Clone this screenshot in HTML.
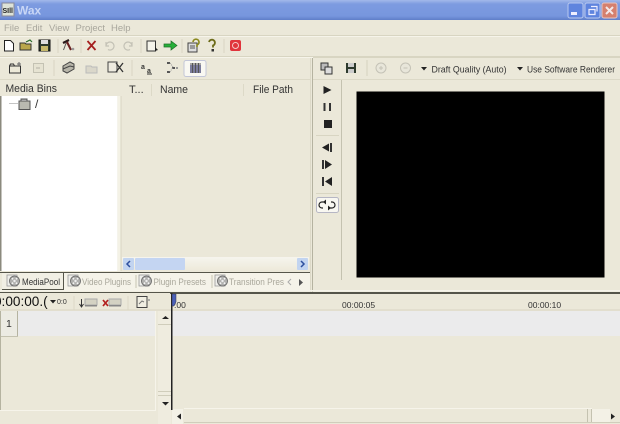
<!DOCTYPE html>
<html><head><meta charset="utf-8"><style>
html,body{margin:0;padding:0;background:#ebe8d9;width:620px;height:424px;overflow:hidden}
svg{display:block;filter:blur(.35px)}
text{font-family:"Liberation Sans",sans-serif;font-size:10px;fill:#333}
</style></head><body>
<svg width="620" height="424" viewBox="0 0 620 424">
<defs>
<linearGradient id="tb" x1="0" y1="0" x2="0" y2="1"><stop offset="0" stop-color="#a3b9ea"/><stop offset=".2" stop-color="#7d9be0"/><stop offset=".8" stop-color="#7796de"/><stop offset="1" stop-color="#5f7ec8"/></linearGradient>
<linearGradient id="sb" x1="0" y1="0" x2="0" y2="1"><stop offset="0" stop-color="#f6f5ee"/><stop offset="1" stop-color="#eeeadb"/></linearGradient>
<g id="reel"><rect x="0" y="2" width="10" height="11" fill="#eeeeea" stroke="#999" stroke-width=".8"/><circle cx="7.500" cy="8" r="5" fill="#b0b0ae" stroke="#666" stroke-width=".8"/><circle cx="7.500" cy="8" r="1.200" fill="#eee"/><circle cx="5.500" cy="5.800" r=".9" fill="#f4f4f4"/><circle cx="9.500" cy="10.200" r=".9" fill="#f4f4f4"/><circle cx="9.500" cy="5.800" r=".9" fill="#f4f4f4"/><circle cx="5.500" cy="10.200" r=".9" fill="#f4f4f4"/></g>
</defs>
<rect width="620" height="424" fill="#ebe8d9"/>
<!-- title bar -->
<rect width="620" height="20" fill="url(#tb)"/>
<rect x="2" y="3" width="12" height="13" fill="#dde3d8" stroke="#889"/>
<text x="2.500" y="13" style="font-size:7px;font-weight:bold;fill:#222">SIll</text>
<text x="17" y="14.500" style="font-size:12px;font-weight:bold;fill:#c9d7f6">Wax</text>
<rect x="568" y="3" width="15" height="15" rx="2" fill="#5f84de" stroke="#b8c8ef"/><rect x="571" y="12" width="6" height="3" fill="#eef"/>
<rect x="585" y="3" width="15" height="15" rx="2" fill="#5f84de" stroke="#b8c8ef"/><path d="M591 6.500h6v5M589 9.500h6v5h-6z" fill="none" stroke="#eef" stroke-width="1.200"/>
<rect x="602" y="3" width="15" height="15" rx="2" fill="#d5806e" stroke="#e8c4c0"/><path d="M606 7l7 7M613 7l-7 7" stroke="#f4e8e8" stroke-width="2"/>
<!-- menu -->
<text x="4" y="31" style="fill:#a8a69c;font-size:9.500px">File</text><text x="26" y="31" style="fill:#a8a69c;font-size:9.500px">Edit</text><text x="49" y="31" style="fill:#a8a69c;font-size:9.500px">View</text><text x="75.500" y="31" style="fill:#a8a69c;font-size:9.500px">Project</text><text x="111" y="31" style="fill:#a8a69c;font-size:9.500px">Help</text>
<rect x="0" y="35" width="620" height="1" fill="#d8d5c2"/><rect x="0" y="36" width="620" height="1" fill="#f6f4ea"/>
<!-- main toolbar -->
<path d="M4.500 40.500h6l3 3v7.500h-9z" fill="#fff" stroke="#222"/>
<path d="M20 43h5l1 1h5v6H20z" fill="#b9a64b" stroke="#333"/><path d="M26 42l4-2 2 2" fill="none" stroke="#2a6b2a" stroke-width="1.200"/>
<rect x="39" y="40" width="11" height="11" fill="#2d3a2d" stroke="#111"/><rect x="41" y="40" width="7" height="4" fill="#ddd"/><rect x="41" y="46" width="7" height="5" fill="#c6b96b"/>
<rect x="57.500" y="39" width="1" height="14" fill="#d8d5c2"/>
<path d="M63 43l6-3" stroke="#2a1a1a" stroke-width="2.200" fill="none"/><path d="M66.500 42l-3 8" stroke="#555" stroke-width="1" fill="none"/><path d="M67 42l4 8" stroke="#6a2020" stroke-width="2" fill="none"/><circle cx="73" cy="49" r="1.300" fill="#999"/>
<rect x="80.500" y="39" width="1" height="14" fill="#d8d5c2"/>
<path d="M87.500 41l8 9M95.500 41l-8 9" stroke="#a52020" stroke-width="1.800"/>
<path d="M106 46a4 4 0 1 1 2 3.500M106 42v4h3" fill="none" stroke="#c4c2b6" stroke-width="1.200"/>
<path d="M132 46a4 4 0 1 0-2 3.500M132 42v4h-3" fill="none" stroke="#c4c2b6" stroke-width="1.200"/>
<rect x="140.500" y="39" width="1" height="14" fill="#d8d5c2"/>
<rect x="147" y="41" width="8.500" height="10" fill="#f4f3ea" stroke="#333"/><path d="M155 47l3 3-3 1z" fill="#222"/>
<path d="M164 44h7v-3l6 4.500-6 4.500v-3h-7z" fill="#27b03a" stroke="#1f6d28" stroke-width=".7"/>
<rect x="181.500" y="39" width="1" height="14" fill="#d8d5c2"/>
<rect x="188" y="43" width="9" height="9" fill="#ddd" stroke="#444"/><path d="M190 46h5M190 48h5" stroke="#555"/><path d="M193 42a3 3 0 1 1 4 3v2" fill="none" stroke="#8c8a20" stroke-width="1.700"/>
<path d="M209 42a3 3 0 1 1 4 3.500v2" fill="none" stroke="#6d6c1a" stroke-width="1.800"/><rect x="211.500" y="49" width="2.500" height="2.500" fill="#333"/>
<rect x="223.500" y="39" width="1" height="14" fill="#d8d5c2"/>
<rect x="230" y="40" width="11" height="11" rx="2" fill="#e0343c"/><circle cx="235.500" cy="45.500" r="3" fill="none" stroke="#f7c6c6"/>
<rect x="0" y="56" width="620" height="1" fill="#d8d5c2"/><rect x="0" y="57" width="620" height="1" fill="#f6f4ea"/>
<!-- left panel toolbar -->
<rect x="0" y="79" width="310" height="1" fill="#dcd9c7"/>
<path d="M9.500 66h11v7h-11z" fill="#ece9d8" stroke="#333"/><path d="M9.500 66l1-2h3l1 2" fill="none" stroke="#333"/><path d="M19 62v4M17 64h4" stroke="#666"/>
<rect x="33.500" y="63.500" width="10" height="9" fill="#e6e3d2" stroke="#c4c2b3"/><path d="M36 68h4" stroke="#b4b2a6"/>
<rect x="53.500" y="60" width="1" height="16" fill="#d8d5c2"/>
<path d="M63 66l7-4 4 2v5l-7 4-4-2z" fill="#b7b5a9" stroke="#444"/><path d="M63 69l7-3 4 1" fill="none" stroke="#444"/>
<path d="M86 66h5l1 1h5v6H86z" fill="#dad7ca" stroke="#bbb"/>
<rect x="108" y="62" width="9" height="10" fill="#eeebe0" stroke="#444"/><path d="M116 63l7 9M123 63l-7 9" stroke="#333" stroke-width="1.300"/>
<rect x="131.500" y="60" width="1" height="16" fill="#d8d5c2"/>
<text x="141" y="69" style="font-size:7px;font-weight:bold;fill:#333">a</text><text x="147" y="73" style="font-size:7px;font-weight:bold;fill:#333">a</text><path d="M147 74h5" stroke="#333"/>
<rect x="167" y="62" width="3" height="2" fill="#555"/><rect x="172" y="67" width="3" height="2" fill="#555"/><rect x="167" y="71" width="3" height="2" fill="#555"/><path d="M170 63l3 4-3 5" stroke="#999" fill="none" stroke-dasharray="1 1"/><rect x="176" y="67" width="2" height="2" fill="#999"/>
<rect x="184" y="60.500" width="22" height="16" rx="2" fill="#f9f8f2" stroke="#c3c6d8"/><rect x="190" y="65" width="11" height="8" fill="#7b7c9c"/><path d="M190 64h11M192.500 63v10M195.500 63v10M198.500 63v10" stroke="#555" stroke-width="1"/>
<!-- headers -->
<text x="5.500" y="92" textLength="51.500" lengthAdjust="spacingAndGlyphs" style="font-size:11px">Media Bins</text>
<text x="129" y="93" style="font-size:11px">T...</text><rect x="151" y="84" width="1" height="12" fill="#dcd9c7"/>
<text x="160" y="93" textLength="28" lengthAdjust="spacingAndGlyphs" style="font-size:11px">Name</text><rect x="243" y="84" width="1" height="12" fill="#dcd9c7"/>
<text x="253" y="93" textLength="40" lengthAdjust="spacingAndGlyphs" style="font-size:11px">File Path</text>
<!-- tree -->
<rect x="1" y="96" width="116.500" height="175" fill="#fff"/><rect x="0" y="96" width="1.500" height="175" fill="#8b8a7e"/>
<rect x="118" y="96" width="2.500" height="175" fill="#f4f2e6"/><rect x="120.500" y="96" width="1" height="175" fill="#d8d5c2"/>
<path d="M9 103.500h9" stroke="#c4c4c4"/>
<path d="M19 101h11v8.500H19z" fill="#b9b9b0" stroke="#555"/><path d="M21 101v-2h6v2" fill="#aaa" stroke="#555"/>
<text x="35" y="108" style="font-size:12px">/</text>
<!-- scrollbar -->
<rect x="122" y="257" width="187" height="13" fill="url(#sb)"/>
<rect x="123" y="258" width="11" height="12" rx="1" fill="#c2d4f0"/><path d="M130 261l-3 3 3 3" fill="none" stroke="#2d4f9e" stroke-width="1.500"/>
<rect x="135" y="258" width="50" height="12" rx="1" fill="#c4d5f2"/>
<rect x="297" y="258" width="11" height="12" rx="1" fill="#c2d4f0"/><path d="M301 261l3 3-3 3" fill="none" stroke="#2d4f9e" stroke-width="1.500"/>
<rect x="310" y="58" width="1" height="234" fill="#dcd9c7"/><rect x="312" y="58" width="1" height="234" fill="#b5b3a0"/>
<!-- tabs -->
<rect x="0" y="272" width="310" height="1" fill="#55554a"/>
<rect x="2" y="273" width="61" height="16" fill="#f1efe4"/><path d="M63.500 273v16.500H2" fill="none" stroke="#55554a"/>
<rect x="64" y="273" width="246" height="17" fill="#f5f3e9"/>
<use href="#reel" x="7" y="273"/><text x="22" y="285" textLength="38" lengthAdjust="spacingAndGlyphs" style="font-size:9px">MediaPool</text>
<use href="#reel" x="68" y="273"/><text x="82" y="285" textLength="49" lengthAdjust="spacingAndGlyphs" style="font-size:9px;fill:#a9a79b">Video Plugins</text>
<rect x="135.500" y="275" width="1" height="13" fill="#c6c4b4"/>
<use href="#reel" x="139" y="273"/><text x="153.500" y="285" textLength="52.500" lengthAdjust="spacingAndGlyphs" style="font-size:9px;fill:#a9a79b">Plugin Presets</text>
<rect x="211.500" y="275" width="1" height="13" fill="#c6c4b4"/>
<use href="#reel" x="215" y="273"/><text x="229" y="285" textLength="55" lengthAdjust="spacingAndGlyphs" style="font-size:9px;fill:#a9a79b">Transition Pres</text>
<path d="M291 279l-3 3 3 3" fill="none" stroke="#aaa"/><path d="M299 279l4 3.500-4 3.500z" fill="#555"/>
<!-- preview toolbar -->
<rect x="313" y="57" width="307" height="1" fill="#d8d5c2"/><rect x="313" y="79" width="307" height="1" fill="#dcd9c7"/>
<rect x="321" y="63" width="7" height="7" fill="#bbb" stroke="#333"/><rect x="325" y="67" width="7" height="7" fill="#ddd" stroke="#333"/>
<rect x="346" y="63" width="10" height="10" fill="#2d3a2d"/><rect x="348" y="63" width="6" height="4" fill="#ccc"/><rect x="348" y="69" width="6" height="4" fill="#ccc"/>
<rect x="366.500" y="60" width="1" height="16" fill="#d5d2c0"/>
<circle cx="381" cy="68" r="5" fill="#e8e6da" stroke="#c4c2b6"/><path d="M379 68h4M381 66v4" stroke="#c4c2b6"/>
<circle cx="405.500" cy="68" r="5" fill="#e8e6da" stroke="#c4c2b6"/><path d="M403.500 68h4" stroke="#c4c2b6"/>
<path d="M421 67h6l-3 3.500z" fill="#222"/>
<text x="431.500" y="72.500" textLength="75" lengthAdjust="spacingAndGlyphs" style="font-size:9px">Draft Quality (Auto)</text>
<path d="M517 67h6l-3 3.500z" fill="#222"/>
<text x="527" y="72.500" textLength="88" lengthAdjust="spacingAndGlyphs" style="font-size:9px">Use Software Renderer</text>
<!-- transport -->
<rect x="341" y="80" width="1" height="200" fill="#c4c2b0"/>
<path d="M323.500 86l8 4-8 4z" fill="#222"/>
<rect x="323.500" y="103" width="2" height="8" fill="#333"/><rect x="329" y="103" width="2" height="8" fill="#333"/>
<rect x="324" y="120" width="8" height="8" fill="#222"/>
<rect x="316" y="135" width="23" height="1" fill="#d8d5c2"/>
<path d="M322 147.500l7-4v8z" fill="#222"/><rect x="330" y="143" width="2" height="9" fill="#333"/>
<rect x="322" y="160" width="2" height="9" fill="#333"/><path d="M325 160l7 4.500-7 4.500z" fill="#222"/>
<rect x="322" y="177" width="2" height="9" fill="#333"/><path d="M325 181.500l7-4.500v9z" fill="#222"/>
<rect x="316" y="193" width="23" height="1" fill="#d8d5c2"/>
<rect x="316.500" y="197.500" width="22" height="15" rx="2" fill="#f8f7f1" stroke="#b6b6c4"/>
<path d="M325 202h-3a3 3 0 0 0 0 6h1M329 208h3a3 3 0 0 0 0-6h-1" fill="none" stroke="#222" stroke-width="1.200"/><path d="M326 199.500v5l-3-2.500zM328 205.500v5l3-2.500z" fill="#222"/>
<!-- video -->
<rect x="356.500" y="91.500" width="248" height="186" fill="#000"/>
<!-- divider -->
<rect x="0" y="292" width="620" height="1" fill="#55554a"/><rect x="0" y="290" width="620" height="1.500" fill="#f5f3e9"/>
<!-- timeline toolbar -->
<text x="-6" y="306" style="font-size:13.600px;fill:#111">0:00:00.(</text>
<path d="M50 300h6l-3 3.500z" fill="#222"/><text x="57" y="304" style="font-size:7px">0:0</text>
<rect x="73.500" y="296" width="1" height="14" fill="#dcd9c7"/>
<path d="M81.500 299v7M79.500 304l2 3 2-3" fill="none" stroke="#333"/><rect x="85" y="299" width="12" height="6" fill="#d4d2c3" stroke="#aaa"/><rect x="85" y="305" width="12" height="1.500" fill="#888"/>
<path d="M103 300l5 6M108 300l-5 6" stroke="#b3201f" stroke-width="1.700"/><rect x="109" y="299" width="12" height="6" fill="#d4d2c3" stroke="#aaa"/><rect x="109" y="305" width="12" height="1.500" fill="#888"/>
<rect x="127.500" y="296" width="1" height="14" fill="#dcd9c7"/>
<rect x="137" y="296.500" width="10" height="11" fill="#f0eee2" stroke="#444"/><path d="M139 304l3-3 2 1" stroke="#777" fill="none"/><circle cx="149" cy="300" r="1" fill="#999"/>
<!-- ruler -->
<rect x="170" y="293" width="450" height="1" fill="#55554a"/>
<text x="174" y="308" style="font-size:8.500px">:00</text>
<text x="342" y="308" style="font-size:8.500px">00:00:05</text>
<text x="528" y="308" style="font-size:8.500px">00:00:10</text>
<rect x="0" y="309.500" width="620" height="1" fill="#d8d5c2"/>
<!-- tracks -->
<rect x="18" y="311" width="137" height="25" fill="#ebebeb"/>
<rect x="172" y="311" width="448" height="25" fill="#ebebec"/>
<rect x="0" y="311" width="17.500" height="25" fill="#ecebe3"/><rect x="17" y="311" width="1" height="25" fill="#b5b3a0"/><rect x="0" y="336" width="18" height="1" fill="#c4c2b0"/>
<text x="6" y="327" style="font-size:10.500px">1</text>
<rect x="0" y="311" width="1" height="100" fill="#b5b3a0"/>
<!-- vertical scrollbar -->
<rect x="155" y="311" width="1" height="100" fill="#f6f4ea"/><rect x="158" y="311" width="13" height="100" fill="#efecdf"/>
<rect x="158" y="324" width="13" height="1" fill="#d0cdbb"/>
<rect x="158" y="391" width="13" height="1" fill="#d0cdbb"/><rect x="158" y="395" width="13" height="1" fill="#d0cdbb"/>
<path d="M162 319h7l-3.500-3z" fill="#222"/><path d="M162 402h7l-3.500 3.500z" fill="#222"/>
<!-- horizontal bottom -->
<rect x="0" y="410" width="155" height="1" fill="#f6f4ea"/>
<rect x="158" y="411" width="13" height="13" fill="#efecdf"/>
<rect x="172" y="409" width="11" height="15" fill="#f3f1e6"/><path d="M181 413.500v6l-4-3z" fill="#222"/>
<rect x="184" y="408" width="408" height="1" fill="#f6f4ea"/><rect x="184" y="422" width="436" height="1" fill="#d0cdbb"/>
<rect x="587" y="409" width="1" height="13" fill="#c4c2b0"/><rect x="591" y="409" width="1" height="13" fill="#c4c2b0"/>
<rect x="592" y="409" width="18" height="13" fill="#f3f1e6"/><path d="M611 413.500v6l4-3z" fill="#222"/>
<!-- playhead -->
<rect x="171" y="293" width="1.500" height="117" fill="#222"/>
<path d="M172 294h4v8l-2 4h-2z" fill="#4a60b8" stroke="#334" stroke-width=".5"/>
</svg>
</body></html>
